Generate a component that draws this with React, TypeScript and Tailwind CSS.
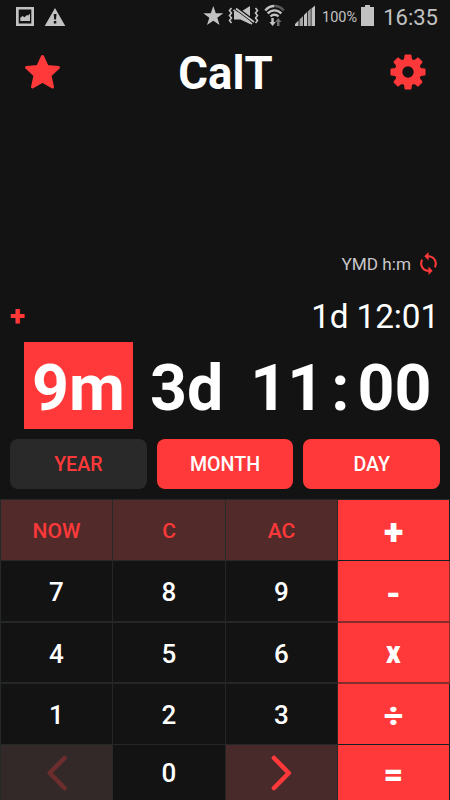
import React from "react";

type Key = { label: React.ReactNode; cell: string; text: string };

const digit = "text-white text-[26px] font-medium";
const op = "text-white font-black";
const func = "text-[#ff3939] text-[21px] font-medium";
const dark = "bg-[#131313] border-[#252727]";
const red = "bg-[#ff3939]";
const wine = "bg-[#522a2a] border-[#282a2a]";

function Chevron({ d, color }: { d: string; color: string }) {
  return (
    <svg width="24" height="40" viewBox="0 0 24 40" fill="none" stroke={color} strokeWidth="4.600" strokeLinecap="round" strokeLinejoin="round">
      <path d={d} />
    </svg>
  );
}

const keys: Key[] = [
  { label: "NOW", cell: wine, text: func },
  { label: "C", cell: wine, text: func },
  { label: "AC", cell: wine, text: func },
  { label: <span className="mt-[3px]">+</span>, cell: `${red} border-[#122022]`, text: `${op} text-[36px]` },
  { label: "7", cell: dark, text: digit },
  { label: "8", cell: dark, text: digit },
  { label: "9", cell: dark, text: digit },
  { label: <span className="mt-[2px]">-</span>, cell: `${red} border-[#832d2d]`, text: `${op} text-[34px]` },
  { label: "4", cell: dark, text: digit },
  { label: "5", cell: dark, text: digit },
  { label: "6", cell: dark, text: digit },
  {
    label: <span className="-mt-[3px] inline-block scale-x-[0.88]">x</span>,
    cell: `${red} border-[#832d2d]`,
    text: `${op} text-[32px]`,
  },
  { label: "1", cell: dark, text: digit },
  { label: "2", cell: dark, text: digit },
  { label: "3", cell: dark, text: digit },
  { label: "÷", cell: `${red} border-[#122022]`, text: `${op} text-[34px]` },
  { label: <Chevron d="M19.500 5L4.700 20l14.800 15" color="#6d2d2d" />, cell: "bg-[#332929] border-[#282a2a]", text: "" },
  { label: "0", cell: dark, text: digit },
  { label: <Chevron d="M4 5l14.800 15L4 35" color="#ff3939" />, cell: "bg-[#482a2a] border-[#282a2a]", text: "" },
  { label: <span className="mt-[3px]">=</span>, cell: `${red} border-[#122022]`, text: `${op} text-[34px]` },
];

const rowLine = [
  "border-b pt-[2px]",
  "border-b-2 pt-[2px]",
  "border-b-2 pt-[2px]",
  "border-b pt-[2px]",
  "border-b-0",
];

function StatusBar() {
  return (
    <div className="flex h-[34px] items-center pl-4 pr-3 text-[#c2c2c2]">
      <svg width="50" height="22" viewBox="0 0 50 22" fill="currentColor">
        <path fillRule="evenodd" d="M0 1h18v19H0zM2.700 3.500v14h12.600v-14z" />
        <path d="M4.300 15v-3.200l2.200-1.800 2 1.200 2.500-2.200 1 .6 2-1.800V15z" />
        <path fillRule="evenodd" d="M39 2l10.300 18H28.700zM37.700 8l.5 5.500h1.800L40.500 8zM37.800 15v2.500h2.500V15z" />
      </svg>
      <svg className="ml-[137px]" width="113" height="34" viewBox="0 0 113 34" fill="currentColor">
        <path d="M10.300 6l2.500 7.200h7.500l-6 4.600 2.300 7.300-6.300-4.300-6.300 4.300 2.300-7.300-6-4.600h7.500z" />
        <path d="M31 12h6.500l9.500-6v18l-9.500-4.500H31z" />
        <path d="M32 7.500L52 22.500" stroke="#131313" strokeWidth="4" />
        <path d="M33 8.500L51 22" stroke="currentColor" strokeWidth="1.600" />
        <path d="M30.500 10L49 24" stroke="currentColor" strokeWidth="1.600" />
        <g fill="none" stroke="currentColor" strokeWidth="1.600">
          <path d="M28.500 8l-2 2.500 2 2.500-2 2.500 2 2.500-2 2.500 2 2.500" />
          <path d="M52.500 8l2 2.500-2 2.500 2 2.500-2 2.500 2 2.500-2 2.500" />
        </g>
        <g fill="none" strokeWidth="2.400">
          <path d="M62.300 10.500a12 12 0 0 1 9.200-4.500" stroke="currentColor" />
          <path d="M71.500 6a12 12 0 0 1 9.200 4.500" stroke="#5a5a5a" />
          <path d="M64.700 13.500a9 9 0 0 1 13.600 0M67.500 16.500a5.500 5.500 0 0 1 8 0" stroke="currentColor" />
        </g>
        <path d="M68.300 18h2.500v4h2L69.600 26l-3.200-4h1.900z" />
        <path d="M74 26h2.500v-4h2l-3.200-4-3.200 4H74z" fill="#707070" />
        <path d="M92 26v-2l3.500-3.500V26zM101 26V15l3-3v14zM108.500 26V8.500L112 5.500V26z" />
        <path d="M96.500 26v-6.500l3.500-3.500v10zM104.800 26V11.500l3-3V26z" fill="#a2a2a2" />
      </svg>
      <span className="ml-[6px] pt-px text-[14.500px]">100%</span>
      <svg className="-mt-[2px] ml-[4px]" width="13" height="22" viewBox="0 0 13 22" fill="currentColor">
        <path d="M4 0h5v2h4v19H0V2h4z" />
      </svg>
      <span className="ml-auto text-[22px]">16:35</span>
    </div>
  );
}

const gearOutline = Array.from({ length: 8 }, (_, i) =>
  [
    [-19, 12.2],
    [-13, 13.2],
    [-8.5, 16.7],
    [8.5, 16.7],
    [13, 13.2],
    [19, 12.2],
  ]
    .map(([deg, r]) => {
      const a = ((i * 45 + deg) * Math.PI) / 180;
      return `${(18 + r * Math.sin(a)).toFixed(2)},${(18 - r * Math.cos(a)).toFixed(2)}`;
    })
    .join(" "),
).join(" ");

function Gear() {
  return (
    <svg className="-mt-[3px]" width="36" height="36" viewBox="0 0 36 36">
      <polygon points={gearOutline} fill="#ff3939" stroke="#ff3939" strokeWidth="2" strokeLinejoin="round" />
      <circle cx="18" cy="18" r="5.700" fill="#131313" />
    </svg>
  );
}

function Action({ label, off }: { label: string; off?: boolean }) {
  return (
    <button className={`h-[50px] w-[137px] rounded-[8px] pt-[2px] text-[19.600px] font-medium ${off ? "bg-[#292929] text-[#ff3939]" : "bg-[#ff3939] text-white"}`}>
      {label}
    </button>
  );
}

export default function App() {
  return (
    <div className="flex h-[800px] w-[450px] flex-col overflow-hidden bg-[#131313] font-[Roboto,sans-serif] text-white">
      <StatusBar />
      <header className="flex h-[78px] items-center justify-between px-[24px]">
        <svg className="-mt-[2px]" width="37" height="36" viewBox="0 0 37 36" fill="#ff3939" stroke="#ff3939" strokeWidth="3" strokeLinejoin="round">
          <path d="M18.500 2.500l4.600 9.900 11.400 1.100-8.500 7.800 2.500 11.700-10-5.700-10 5.700 2.500-11.700-8.500-7.800 11.400-1.100z" />
        </svg>
        <h1 className="pt-[2px] text-[45.500px] font-bold leading-none">CalT</h1>
        <Gear />
      </header>
      <div className="mt-[140px] flex h-[24px] items-center justify-end gap-[5px] pr-[9px] text-[17.200px] text-[#c8c8c8]">
        <span className="pt-px">YMD h:m</span>
        <svg className="-mt-[2px]" width="25" height="25" viewBox="0 0 24 24" fill="#ff3939">
          <path d="M12 4V1L8 5l4 4V6c3.310 0 6 2.690 6 6 0 1.010-.25 1.970-.7 2.800l1.460 1.460C19.540 15.030 20 13.570 20 12c0-4.420-3.580-8-8-8zm0 14c-3.310 0-6-2.690-6-6 0-1.010.25-1.970.7-2.800L5.240 7.740C4.460 8.970 4 10.430 4 12c0 4.420 3.580 8 8 8v3l4-4-4-4v3z" />
        </svg>
      </div>
      <div className="mt-[18px] flex h-[44px] items-center justify-between pl-[10px] pr-[11px]">
        <span className="text-[28px] font-black leading-none text-[#ff3939]">+</span>
        <span className="pt-[2px] text-[33.300px] tracking-[-0.100px]">1d 12:01</span>
      </div>
      <div className="mt-[4px] flex h-[87px] pl-6 text-[64.500px] font-bold leading-[92px]">
        <span className="w-[109px] bg-[#ff3939] text-center">9m</span>
        <span className="ml-[17px]">3d</span>
        <span className="ml-[27px]">11</span>
        <span className="ml-[7px]">:</span>
        <span className="ml-[8px]">00</span>
      </div>
      <div className="mt-[10px] flex h-[50px] gap-[10px] px-[10px]">
        <Action label="YEAR" off />
        <Action label="MONTH" />
        <Action label="DAY" />
      </div>
      <div className="mt-[10px] grid grid-cols-[112px_113px_112px_112px] grid-rows-[61px_62px_61px_61px_55px] border-l border-t border-[#232828]">
        {keys.map((k, i) => (
          <button key={i} className={`flex items-center justify-center border-r leading-none ${rowLine[Math.floor(i / 4)]} ${k.cell} ${k.text}`}>
            {k.label}
          </button>
        ))}
      </div>
    </div>
  );
}
